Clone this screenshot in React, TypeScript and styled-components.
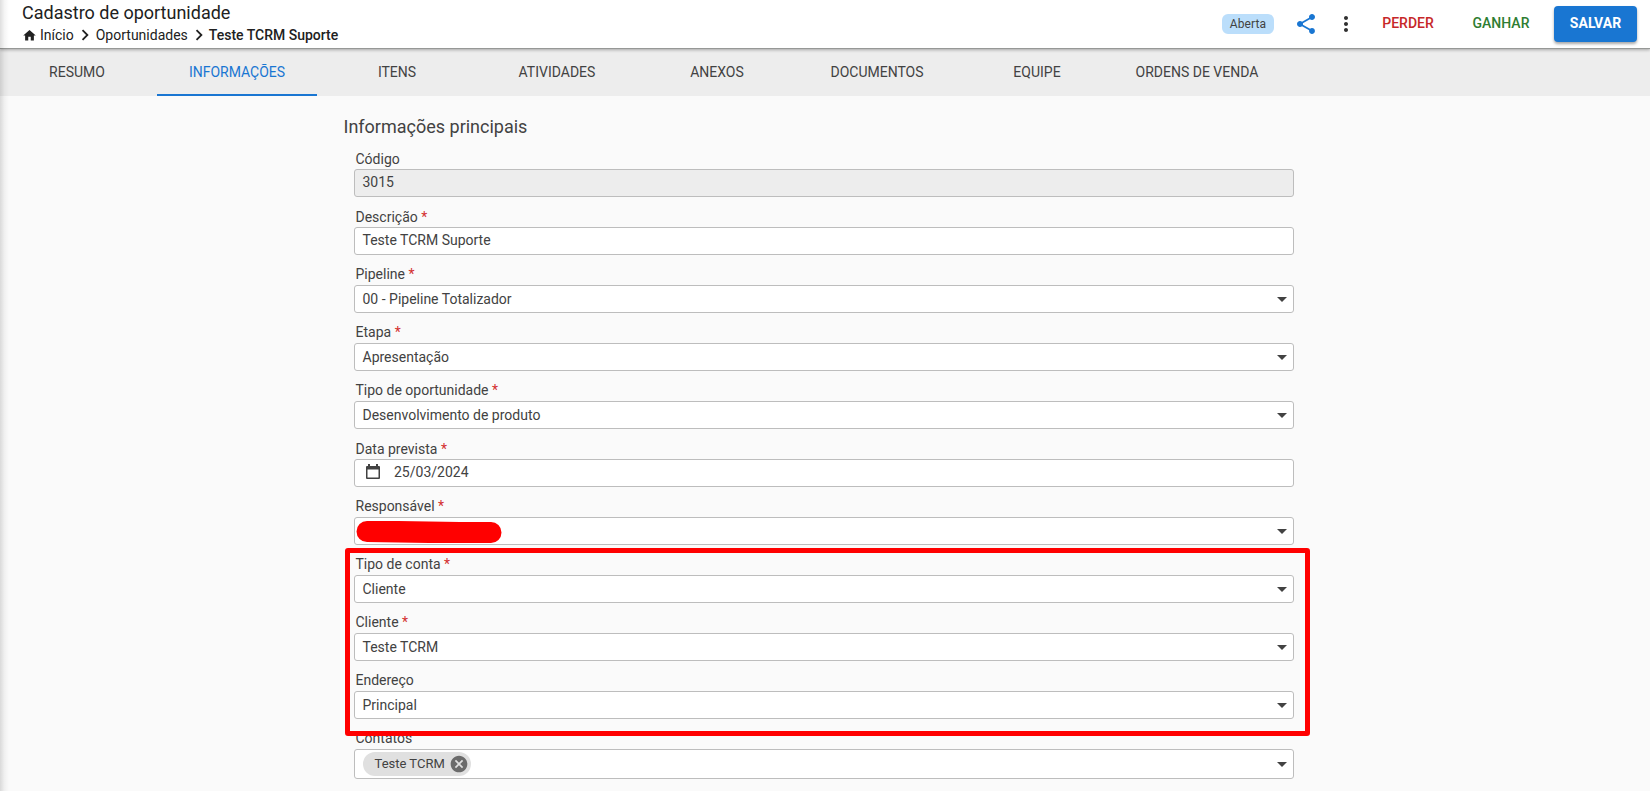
import React from "react";
import styled, { createGlobalStyle } from "styled-components";
import { MdShare, MdMoreVert, MdHome, MdChevronRight, MdArrowDropDown, MdCancel } from "react-icons/md";

const GlobalStyle = createGlobalStyle`
  * { box-sizing: border-box; }
  body {
    margin: 0;
    background: #fafafa;
    color: #424242;
    font: 400 14px/20px Roboto, sans-serif;
    overflow: hidden;
  }
`;

const Page = styled.div`
  position: relative;
  height: 791px;
  overflow: hidden;
  &::before {
    content: "";
    position: absolute;
    inset: 0 auto 0 0;
    width: 9px;
    z-index: 5;
    background: linear-gradient(to right, rgba(0, 0, 0, 0.13), rgba(0, 0, 0, 0.04) 50%, transparent);
  }
`;

const Header = styled.header`
  position: relative;
  z-index: 1;
  display: flex;
  justify-content: space-between;
  height: 49px;
  padding: 0 13px 0 22px;
  background: #fff;
  border-bottom: 1px solid #969896;
  box-shadow: 0 1px 3px rgba(0, 0, 0, 0.3);
`;

const Title = styled.h1`
  margin: 0;
  font-size: 18px;
  line-height: 26px;
  font-weight: 400;
  color: #212121;
`;

const Breadcrumb = styled.nav`
  display: flex;
  align-items: center;
  height: 18px;
  line-height: 18px;
  color: #212121;
  svg { flex: none; }
`;

const HomeIcon = styled(MdHome)`
  width: 15px;
  height: 15px;
  margin-right: 3px;
`;

const Separator = styled(MdChevronRight)`
  width: 22px;
  height: 22px;
`;

const Crumb = styled.span<{ $current?: boolean }>`
  margin-left: ${(p) => (p.$current ? -1 : 0)}px;
  font-weight: ${(p) => (p.$current ? 500 : 400)};
`;

const Actions = styled.div`
  display: flex;
  align-items: center;
  height: 46px;
`;

const Status = styled.span`
  width: 52px;
  height: 20px;
  margin: 2px 20px 0 0;
  border-radius: 6px;
  background: #bbdefb;
  font-size: 12px;
  line-height: 20px;
  letter-spacing: 0.1px;
  text-align: center;
`;

const IconButton = styled.button<{ $color: string; $gap: number }>`
  display: flex;
  width: 24px;
  height: 24px;
  margin: 2px ${(p) => p.$gap}px 0 0;
  padding: 0;
  border: 0;
  background: none;
  color: ${(p) => p.$color};
`;

const TextButton = styled.button<{ $color: string }>`
  width: 76px;
  height: 36px;
  margin-right: 17px;
  padding: 0;
  border: 0;
  background: none;
  color: ${(p) => p.$color};
  font: 500 14px/34px Roboto, sans-serif;
`;

const SaveButton = styled(TextButton)`
  width: 83px;
  margin: 2px 0 0 -2px;
  border-radius: 4px;
  background: #1976d2;
  font-weight: 700;
  line-height: 32px;
  padding-bottom: 2px;
  box-shadow: 0 2px 3px rgba(0, 0, 0, 0.35);
`;

const Tabs = styled.nav`
  display: flex;
  height: 47px;
  margin-left: -3px;
  background: #ededed;
`;

const Tab = styled.a<{ $active?: boolean }>`
  width: 160px;
  line-height: 47px;
  text-align: center;
  color: ${(p) => (p.$active ? "#1976d2" : "#424242")};
  box-shadow: ${(p) => (p.$active ? "inset 0 -2px #1976d2" : "none")};
`;

const Form = styled.main`
  width: 951px;
  margin-left: 343px;
  padding-top: 19px;
`;

const SectionTitle = styled.h2`
  margin: 0 0 6px;
  padding-left: 0.5px;
  font-size: 18px;
  line-height: 24px;
  font-weight: 400;
`;

const Fields = styled.div`
  padding-left: 11px;
`;

const Highlight = styled.div`
  position: relative;
  &::after {
    content: "";
    position: absolute;
    inset: -3px -16px -11px -9px;
    z-index: 2;
    border: 5px solid #f00;
    border-radius: 3px;
  }
`;

const Field = styled.div`
  height: 58px;
  padding-top: 1px;
`;

const Label = styled.label<{ $raised: boolean }>`
  display: block;
  height: 23px;
  padding: ${(p) => (p.$raised ? 2 : 3)}px 0 0 1.5px;
`;

const Required = styled.span`
  color: #d32f2f;
`;

const Control = styled.div<{ $disabled?: boolean; $height: number; $shift: number }>`
  position: relative;
  display: flex;
  align-items: center;
  height: ${(p) => p.$height}px;
  padding: 0 0 ${(p) => p.$shift}px 7.5px;
  border: 1px solid #bdbdbd;
  border-radius: 3px;
  background: ${(p) => (p.$disabled ? "#ededed" : "#fff")};
`;

const Value = styled.span`
  flex: 1;
`;

const Arrow = styled(MdArrowDropDown)`
  flex: none;
  width: 24px;
  height: 24px;
  margin-right: -0.5px;
`;

const CalendarIcon = styled.svg`
  width: 14px;
  height: 16px;
  margin: 0 14px 0 3.5px;
`;

const Redaction = styled.svg`
  position: absolute;
  left: 0.5px;
  top: 3px;
  width: 146px;
  height: 23px;
`;

const Chip = styled.span`
  display: flex;
  align-items: center;
  justify-content: space-between;
  width: 108px;
  height: 24px;
  margin-right: auto;
  padding: 0 2px 0 12px;
  border-radius: 12px;
  background: #e0e0e0;
  font-size: 13px;
  svg { color: #6b6b6b; }
`;

type FieldProps = {
  label: string;
  required?: boolean;
  select?: boolean;
  disabled?: boolean;
  height?: number;
  children?: React.ReactNode;
};

function FormField({ label, required, select = false, disabled, height = 28, children }: FieldProps) {
  return (
    <Field>
      <Label $raised={select}>
        {label} {required && <Required>*</Required>}
      </Label>
      <Control $disabled={disabled} $height={height} $shift={select ? 0 : 2}>
        {children}
        {select && <Arrow />}
      </Control>
    </Field>
  );
}

const tabs = ["RESUMO", "INFORMAÇÕES", "ITENS", "ATIVIDADES", "ANEXOS", "DOCUMENTOS", "EQUIPE", "ORDENS DE VENDA"];

export default function App() {
  return (
    <Page>
      <GlobalStyle />
      <Header>
        <div>
          <Title>Cadastro de oportunidade</Title>
          <Breadcrumb>
            <HomeIcon />
            <Crumb>Início</Crumb>
            <Separator />
            <Crumb>Oportunidades</Crumb>
            <Separator />
            <Crumb $current>Teste TCRM Suporte</Crumb>
          </Breadcrumb>
        </div>
        <Actions>
          <Status>Aberta</Status>
          <IconButton $color="#1976d2" $gap={16}><MdShare size={24} /></IconButton>
          <IconButton $color="#303030" $gap={12}><MdMoreVert size={24} /></IconButton>
          <TextButton $color="#c62828">PERDER</TextButton>
          <TextButton $color="#2e7d32">GANHAR</TextButton>
          <SaveButton $color="#fff">SALVAR</SaveButton>
        </Actions>
      </Header>
      <Tabs>
        {tabs.map((name) => (
          <Tab key={name} $active={name === "INFORMAÇÕES"}>{name}</Tab>
        ))}
      </Tabs>
      <Form>
        <SectionTitle>Informações principais</SectionTitle>
        <Fields>
          <FormField label="Código" disabled><Value>3015</Value></FormField>
          <FormField label="Descrição" required><Value>Teste TCRM Suporte</Value></FormField>
          <FormField label="Pipeline" required select><Value>00 - Pipeline Totalizador</Value></FormField>
          <FormField label="Etapa" required select><Value>Apresentação</Value></FormField>
          <FormField label="Tipo de oportunidade" required select><Value>Desenvolvimento de produto</Value></FormField>
          <FormField label="Data prevista" required>
            <CalendarIcon viewBox="0 0 14 16">
              <path fill="#424242" fillRule="evenodd" d="M2 0h2v2h6V0h2v2h1q1 0 1 1v11q0 1-1 1H1q-1 0-1-1V3q0-1 1-1h1zM1.5 5.5v8h11v-8z" />
            </CalendarIcon>
            <Value>25/03/2024</Value>
          </FormField>
          <FormField label="Responsável" required select>
            <Value />
            <Redaction viewBox="0 0 146 23">
              <path fill="#f00" d="M11 0H42L73 .4L104 1H135A10.5 10.5 0 0 1 135 22H73L42 21.6L11 21A10.5 10.5 0 0 1 11 0Z" />
            </Redaction>
          </FormField>
          <Highlight>
            <FormField label="Tipo de conta" required select><Value>Cliente</Value></FormField>
            <FormField label="Cliente" required select><Value>Teste TCRM</Value></FormField>
            <FormField label="Endereço" select><Value>Principal</Value></FormField>
          </Highlight>
          <FormField label="Contatos" select height={30}>
            <Chip>Teste TCRM <MdCancel size={20} /></Chip>
          </FormField>
        </Fields>
      </Form>
    </Page>
  );
}
